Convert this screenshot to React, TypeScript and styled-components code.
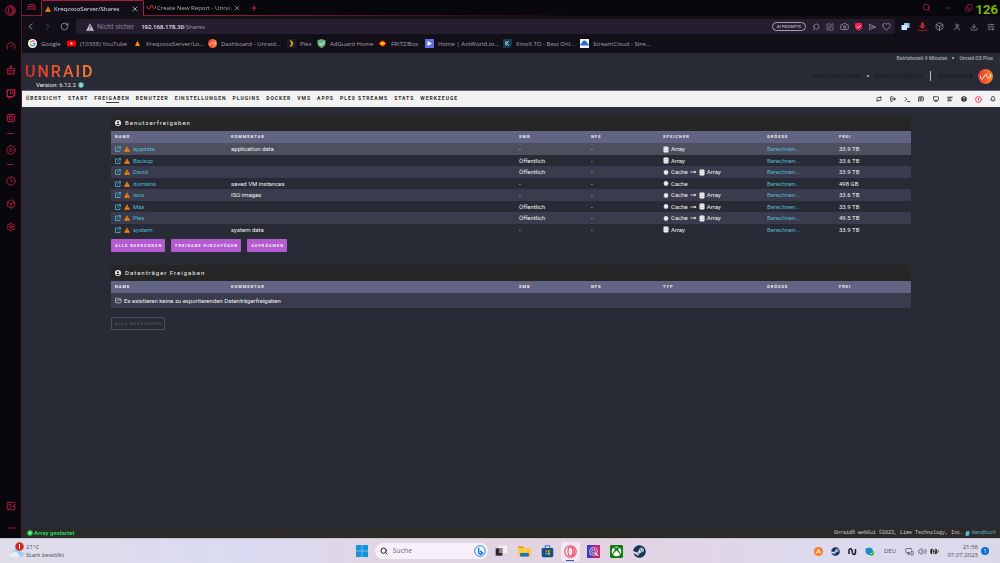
import React from "react";
import styled, { createGlobalStyle, css } from "styled-components";
import {
  Bell, Box, Camera, ChevronLeft, ChevronRight, CirclePlay, Clock, Copy, Cpu, Download, Ellipsis,
  FolderOpen, Gauge, Heart, Image, LogOut, Minus, Monitor, Plus, Repeat, RotateCw, Search,
  SendHorizontal, Settings, SlidersHorizontal, SquarePen, Terminal, Twitch, User, Volume2, X, MessageSquareText,
  TextAlignStart, CircleAlert, BatteryCharging, MonitorSmartphone,
} from "lucide-react";
import { FaSteam, FaXbox } from "react-icons/fa";

const ui = `"Open Sans", "Noto Sans", sans-serif`;
const web = `"Roboto", sans-serif`;
const pink = "#c21d47";

const Global = createGlobalStyle`
  *, *::before, *::after { box-sizing: border-box; }
  body { margin: 0; background: #282a36; }
  button, input { font: inherit; color: inherit; border: 0; padding: 0; margin: 0; background: none; }
  a { color: inherit; text-decoration: none; }
  svg { display: block; flex: none; }
`;

const Desktop = styled.div`
  min-height: 100vh;
  display: flex;
  flex-direction: column;
  font: 6px/8px ${ui};
`;
const Browser = styled.div`
  flex: 1;
  display: flex;
  background: #08080c;
`;

/* browser side bar */
const Sidebar = styled.aside`
  width: 21px;
  flex: none;
  display: flex;
  flex-direction: column;
  align-items: center;
  color: ${pink};
`;
const SideButton = styled.button<{ $h?: number }>`
  width: 21px;
  height: ${(p) => p.$h ?? 23}px;
  display: grid;
  place-items: center;
`;
const SideTop = styled.div`
  height: 34px;
  padding-top: 5px;
`;
const SideDash = styled.hr`
  width: 7px;
  height: 1px;
  margin: 3px 0 4px;
  border: 0;
  background: #8d1a38;
`;
const Spacer = styled.div`
  flex: 1;
`;

/* browser chrome */
const Window = styled.div`
  flex: 1;
  min-width: 0;
  display: flex;
  flex-direction: column;
  border-left: 1px solid #5d1430;
`;
const TabStrip = styled.div`
  height: 16px;
  display: flex;
  color: ${pink};
`;
const underline = css`
  border-bottom: 1px solid #8a1838;
`;
const StripStart = styled.div`
  width: 19px;
  display: grid;
  place-items: center;
  ${underline}
`;
const Tab = styled.div<{ $active?: boolean }>`
  width: ${(p) => (p.$active ? 103 : 101)}px;
  display: flex;
  align-items: center;
  gap: ${(p) => (p.$active ? 3 : 1)}px;
  padding: 0 4px 0 3px;
  color: ${(p) => (p.$active ? "#e6e2ec" : "#b3aebb")};
  ${(p) =>
    p.$active
      ? css`
          background: #120f18;
          border: 1px solid #a81b40;
          border-bottom: 0;
          border-radius: 2px 2px 0 0;
        `
      : underline}
`;
const TabTitle = styled.span`
  flex: 1;
  overflow: hidden;
  white-space: nowrap;
  mask-image: linear-gradient(90deg, #000 90%, #0006);
`;
const StripRest = styled.div`
  flex: 1;
  display: flex;
  align-items: center;
  justify-content: space-between;
  padding-left: 5px;
  border-bottom: 1px solid;
  border-image: linear-gradient(90deg, #8a1838, #08080c 45%) 1;
`;
const WindowButtons = styled.div`
  display: flex;
`;
const Slot = styled.button<{ $w: number }>`
  width: ${(p) => p.$w}px;
  display: grid;
  place-items: center;
`;
const Fps = styled.span`
  position: absolute;
  right: 2px;
  top: 3px;
  font: bold 13px/14px "Roboto", sans-serif;
  color: #76b900;
`;
const Toolbar = styled.div`
  height: 20px;
  display: flex;
  align-items: center;
  padding: 1px 1px 0 0;
  background: #120f18;
  color: #a59fb0;
`;
const Address = styled.div`
  flex: 1;
  height: 15px;
  margin: 0 2px 0 3px;
  padding: 0 2px 0 10px;
  display: flex;
  align-items: center;
  gap: 3px;
  background: #241e30;
  border-radius: 2px;
`;
const Insecure = styled.span`
  font: 7px/8px ${web};
  color: #8a8494;
`;
const Url = styled.span`
  flex: 1;
  margin-left: 4px;
  color: #a59fb0;
  b { font-weight: 600; color: #e6e2ec; }
`;
const Pill = styled.button`
  height: 9px;
  padding: 0 4px;
  border: 1px solid #a59fb0;
  border-radius: 5px;
  font: bold 4px/6px ${ui};
`;
const Bookmarks = styled.nav`
  height: 17px;
  padding: 0 6px 2px;
  display: flex;
  align-items: center;
  gap: 6px;
  background: #120f18;
  color: #a7a0b4;
`;
const Bookmark = styled.a<{ $w: number }>`
  width: ${(p) => p.$w}px;
  display: flex;
  align-items: center;
  gap: 4px;
  white-space: nowrap;
`;

/* Unraid page */
const Page = styled.main`
  flex: 1;
  display: flex;
  flex-direction: column;
  background: #282a36;
  color: #f2f2f2;
  font: 6px/8px ${web};
`;
const Header = styled.header`
  height: 38px;
  display: flex;
  justify-content: space-between;
  border-bottom: 1px solid #626483;
`;
const Brand = styled.div`
  padding: 10px 0 0 3px;
`;
const Wordmark = styled.h1`
  margin: 0;
  font: 500 16px/18px "Roboto", sans-serif;
  letter-spacing: 2px;
  color: transparent;
  background: linear-gradient(90deg, #e22828, #ff8c2f);
  background-clip: text;
`;
const Version = styled.div`
  display: flex;
  align-items: center;
  gap: 2px;
  padding-left: 11px;
`;
const ServerInfo = styled.div`
  display: flex;
  flex-direction: column;
  align-items: flex-end;
  padding: 1px 7px 0 0;
`;
const Uptime = styled.div`
  display: flex;
  align-items: center;
  gap: 5px;
  font: bold 5px/8px ${web};
  color: #999aa2;
`;
const ServerLine = styled.div`
  display: flex;
  align-items: center;
  gap: 5px;
  margin-top: 6px;
  font: 7px/16px "Roboto", sans-serif;
  color: #1a1a1e;
`;
const Divider = styled.i`
  width: 1px;
  height: 10px;
  margin: 0 2px;
  background: #b8b8be;
`;
const Bullet = styled.i`
  width: 2px;
  height: 2px;
  border-radius: 1px;
  background: #b8b8be;
`;
const Menu = styled.nav`
  height: 16px;
  display: flex;
  justify-content: space-between;
  background: #f2f2f2;
  color: #2b2b2b;
`;
const MenuList = styled.div`
  display: flex;
  gap: 6px;
  padding: 3px 0 0 4px;
`;
const MenuLink = styled.a<{ $active?: boolean }>`
  display: flex;
  flex-direction: column;
  align-items: center;
  font: bold 5px/8px ${web};
  letter-spacing: 1px;
  text-transform: uppercase;
  ${(p) => p.$active && css`&::after { content: ""; width: 13px; height: 1px; background: #3a3a3a; }`}
`;
const MenuIcons = styled.div`
  display: flex;
  align-items: center;
`;
const Content = styled.div`
  flex: 1;
  width: 100%;
  max-width: 800px;
  margin: 0 auto;
  padding-top: 8px;
`;
const Title = styled.h2`
  height: 16px;
  margin: 0;
  padding: 0 0 1px 4px;
  display: flex;
  align-items: center;
  gap: 4px;
  background: #262626;
  font: 6px/8px ${web};
  letter-spacing: 1px;
`;
const Shares = styled.table`
  width: 100%;
  table-layout: fixed;
  border-collapse: collapse;
  th, td { padding: 0 0 0 4px; text-align: left; line-height: 8px; }
  th {
    height: 12px;
    background: #626483;
    font-size: 4px;
    letter-spacing: 1px;
    text-transform: uppercase;
  }
`;
const Row = styled.tr<{ $tall?: boolean }>`
  height: 11px;
  &:nth-child(odd) { height: ${(p) => (p.$tall ? 15 : 12)}px; background: #3a3b4d; }
  &:hover, &:first-child { background: ${(p) => (p.$tall ? "#3a3b4d" : "#4d4f5e")}; }
`;
const Inline = styled.span`
  display: flex;
  align-items: center;
  gap: 2px;
`;
const NameCell = styled(Inline)`
  gap: 3px;
  color: #4fb9cf;
`;
const Link = styled.a`
  color: #4fb9cf;
`;
const Actions = styled.div<{ $top: number }>`
  display: flex;
  gap: 6px;
  padding: ${(p) => p.$top}px 0 13px;
`;
const Action = styled.button`
  height: 13px;
  padding: 0 3px 0 4px;
  border-radius: 1px;
  background: #b55bd1;
  font: bold 4px/8px ${web};
  letter-spacing: 1px;
  text-transform: uppercase;
  &:disabled { background: none; border: 1px solid #4d4e58; color: #4d4e58; padding: 0 2px 0 3px; }
`;
const Footer = styled.footer`
  height: 10px;
  display: flex;
  align-items: center;
  justify-content: space-between;
  padding: 0 4px 0 5px;
  background: #2b2a29;
`;
const Status = styled(Inline)`
  color: #22d65a;
  font-weight: bold;
  gap: 1px;
`;
const Copyright = styled(Inline)`
  font: 5px/8px "Liberation Mono", monospace;
  color: #d0d0d0;
`;

/* desktop task bar */
const Taskbar = styled.footer`
  height: 25px;
  display: grid;
  grid-template-columns: 1fr auto 1fr;
  align-items: center;
  background: linear-gradient(90deg, #dfdde8, #dadaf2 25%, #e1d5e3 38%, #e2d3e2 60%, #dcdaee 85%, #dbd8ea);
  border-top: 1px solid #c9c7d2;
  color: #4b4b55;
`;
const Weather = styled.div`
  display: flex;
  align-items: center;
  gap: 2px;
  padding-left: 10px;
`;
const Launcher = styled.div`
  display: flex;
  align-items: center;
  padding-left: 6px;
`;
const SearchBox = styled.label`
  width: 113px;
  height: 16px;
  margin: 0 2px 0 7px;
  padding: 0 2px 0 5px;
  display: flex;
  align-items: center;
  gap: 5px;
  border-radius: 8px;
  background: #f6f1f8;
  input { flex: 1; min-width: 0; font-size: 7px; outline: 0; }
  input::placeholder { color: #6b6873; opacity: 1; }
`;
const AppButton = styled.button<{ $active?: boolean }>`
  width: 19px;
  height: 19px;
  margin: 0 2px;
  position: relative;
  display: grid;
  place-items: center;
  border-radius: 2px;
  ${(p) =>
    p.$active &&
    css`
      background: #f1e8f2;
      &::after { content: ""; position: absolute; bottom: 0; width: 8px; height: 1px; background: #0b6fd0; }
    `}
`;
const Tray = styled.div`
  display: flex;
  align-items: center;
  justify-content: flex-end;
  padding-right: 11px;
`;
const Lang = styled.span`
  width: 26px;
  text-align: center;
`;
const ClockText = styled.div`
  width: 38px;
  text-align: right;
`;
const Count = styled.span`
  width: 8px;
  height: 8px;
  margin-left: 3px;
  border-radius: 4px;
  background: #0b6fd0;
  color: #fff;
  text-align: center;
`;

const Warn = ({ size = 6, fill = "#ff8c0a", mark = "#7a3b00" }) => (
  <svg width={size} height={size} viewBox="0 0 12 12">
    <path d="M6 .5 11.8 11.5H.2z" fill={fill} />
    <path d="M6 4v4M6 9v1.4" stroke={mark} strokeWidth="1.3" />
  </svg>
);
const OpenIcon = () => (
  <svg width="6" height="6" viewBox="0 0 12 12" fill="none" stroke="currentColor" strokeWidth="1.6">
    <path d="M6 2H1v9h9V7M5 7l5.500-5.500M7 1h4v4" />
  </svg>
);
const LongArrow = () => (
  <svg width="7" height="6" viewBox="0 0 14 12">
    <path d="M1 6h9" stroke="#f2f2f2" strokeWidth="1.8" />
    <path d="M9 3l4 3-4 3z" fill="#f2f2f2" />
  </svg>
);
const OperaRing = ({ size = 11, color = pink }) => (
  <svg width={size} height={size} viewBox="0 0 24 24" fill="none" stroke={color} strokeWidth="2">
    <circle cx="12" cy="12" r="10.6" />
    <ellipse cx="12" cy="12" rx="4.6" ry="8.4" />
    <path d="M14 3.6c7 2 7 15 0 16.8" />
  </svg>
);
const Broom = () => (
  <svg width="10" height="10" viewBox="0 0 24 24" fill="none" stroke="currentColor" strokeWidth="2">
    <path d="M10 9V2h4v7M3 9h18v5H3zM4 14v8h16v-8M9 22v-4M15 22v-4" />
  </svg>
);
const Wave = ({ size = 9, color = "#d9482b" }) => (
  <svg width={size} height={size} viewBox="0 0 18 18" fill="none" stroke={color} strokeWidth="1.8" strokeLinecap="round">
    <path d="M1 7v2c0 4 4 4 5 1l2-4c1-2 2-2 3 0l1 3c1 3 5 3 5-1V6" />
  </svg>
);
const UnraidDisc = ({ size = 9 }) => (
  <svg width={size} height={size} viewBox="0 0 30 30" fill="none">
    <defs>
      <linearGradient id="disc" x1="0" x2="1"><stop stopColor="#e5352b" /><stop offset="1" stopColor="#ff8b33" /></linearGradient>
    </defs>
    <circle cx="15" cy="15" r="15" fill="url(#disc)" />
    <path d="M5 14v2c0 5 5 5 6 1l3-5c1-2 3-2 3 1l1 2c2 4 7 4 7-1v-3" stroke="#fff" strokeWidth="1.8" strokeLinecap="round" />
  </svg>
);
const Disk = () => (
  <svg width="6" height="7" viewBox="0 0 12 14">
    <rect x="1" y="1" width="10" height="12" rx="2" fill="#f2f2f2" />
    <path d="M1 4.5h10M1 9h10" stroke="#b8a8b4" />
  </svg>
);
const CacheDot = () => (
  <svg width="6" height="7" viewBox="0 0 12 14">
    <circle cx="6" cy="7" r="4.8" fill="#d8d8e0" />
    <path d="M3.5 7h5M6 4.500v5" stroke="#fff" strokeWidth="1.4" />
  </svg>
);
const UserDot = () => (
  <svg width="6" height="6" viewBox="0 0 12 12">
    <circle cx="6" cy="6" r="6" fill="#f2f2f2" />
    <circle cx="6" cy="4.500" r="2.200" fill="#262626" />
    <path d="M2.300 10C3 6.800 9 6.800 9.700 10" fill="#262626" />
  </svg>
);
const Dot = ({ fill, mark }: { fill: string; mark: string }) => (
  <svg width="6" height="6" viewBox="0 0 12 12">
    <circle cx="6" cy="6" r="5.500" fill={fill} />
    <path d={mark} stroke="#fff" strokeWidth="1.600" fill="none" />
  </svg>
);
const art = (paths: React.ReactNode, size = 9) => (
  <svg width={size} height={size} viewBox="0 0 18 18">{paths}</svg>
);

const bookmarks = [
  { w: 33, text: "Google", icon: art(<><circle cx="9" cy="9" r="9" fill="#fff" /><g fill="none" strokeWidth="2.400"><path d="M5 6.500a5 5 0 0 1 8-1" stroke="#ea4335" /><path d="M5 6.500a5 5 0 0 0 0 5" stroke="#fbbc05" /><path d="M5 11.500a5 5 0 0 0 7.500 1.200" stroke="#34a853" /><path d="M12.500 12.700A5 5 0 0 0 14 9H9.500" stroke="#4285f4" /></g></>) },
  { w: 60, text: "(10338) YouTube", icon: art(<><rect y="3" width="18" height="12" rx="3" fill="#f00" /><path d="M7 6v6l5-3z" fill="#fff" /></>) },
  { w: 69, text: "KreqzxooServer/Lo...", icon: art(<path d="M9 3 14 14H4z" fill="#ff8c0a" />) },
  { w: 73, text: "Dashboard - Unraid...", icon: <UnraidDisc /> },
  { w: 24, text: "Plex", icon: art(<><rect width="18" height="18" rx="2" fill="#1d1c1f" /><path d="M5 3h4l4 6-4 6H5l4-6z" fill="#f0a818" /></>) },
  { w: 55, text: "AdGuard Home", icon: art(<><path d="M9 0 17 2.500v6c0 5-4 8-8 9.500-4-1.500-8-4.500-8-9.500v-6z" fill="#67b279" /><path d="m5 8 3.500 4L15 6" stroke="#fff" strokeWidth="2" fill="none" /></>) },
  { w: 41, text: "FRITZ!Box", icon: art(<><path d="M9 2 18 9 9 16 0 9z" fill="#e2001a" /><path d="M9 5v8M4 9h10" stroke="#ffd500" strokeWidth="4" /></>) },
  { w: 72, text: "Home | AniWorld.to...", icon: art(<><rect width="18" height="18" fill="#5e6fe8" /><path d="M5 4v10l9-5z" fill="#fff" /></>) },
  { w: 71, text: "KinoX.TO - Best Onl...", icon: art(<><path d="M0 0h18v13l-5 5H0z" fill="#10404f" /><path d="M6 4v9M12 4 7 8.500l5 4.500" stroke="#c5dde4" strokeWidth="2" fill="none" /></>) },
  { w: 70, text: "StreamCloud - Stre...", icon: art(<><rect width="18" height="18" fill="#f3f6fa" /><path d="M1 13a4 4 0 0 1 3-5 5 5 0 0 1 10 0 4 4 0 0 1 3 5z" fill="#2b70c9" /></>) },
];

const menu = ["Übersicht", "Start", "Freigaben", "Benutzer", "Einstellungen", "Plugins", "Docker", "VMs", "Apps", "Plex Streams", "Stats", "Werkzeuge"];

type Store = "array" | "cache" | "both";
const shares: [string, string, string, Store, string][] = [
  ["appdata", "application data", "-", "array", "33.9 TB"],
  ["Backup", "", "Öffentlich", "array", "33.6 TB"],
  ["David", "", "Öffentlich", "both", "33.9 TB"],
  ["domains", "saved VM instances", "-", "cache", "498 GB"],
  ["isos", "ISO images", "-", "both", "33.6 TB"],
  ["Max", "", "Öffentlich", "both", "33.9 TB"],
  ["Plex", "", "Öffentlich", "both", "49.5 TB"],
  ["system", "system data", "-", "array", "33.9 TB"],
];

const Col = styled.col<{ $w: string }>`
  width: ${(p) => p.$w};
`;
const Columns = () => (
  <colgroup>
    {["14.5%", "36%", "9%", "9%", "13%", "9%", "9.5%"].map((w, i) => <Col key={i} $w={w} />)}
  </colgroup>
);
const Head = ({ store }: { store: string }) => (
  <thead>
    <tr>{["Name", "Kommentar", "SMB", "NFS", store, "Grösse", "Frei"].map((h) => <th key={h} scope="col">{h}</th>)}</tr>
  </thead>
);

export default function App() {
  return (
    <Desktop>
      <Global />
      <Browser>
        <Sidebar>
          <SideTop><OperaRing /></SideTop>
          <SideButton $h={24} aria-label="Speed"><Gauge size={10} /></SideButton>
          <SideButton $h={24} aria-label="Cleaner"><Broom /></SideButton>
          <SideButton $h={24} aria-label="Twitch"><Twitch size={10} strokeWidth={3} /></SideButton>
          <SideButton $h={24} aria-label="Limiter"><Cpu size={10} /></SideButton>
          <SideDash />
          <SideButton aria-label="Player"><CirclePlay size={10} /></SideButton>
          <SideDash />
          <SideButton aria-label="History"><Clock size={10} /></SideButton>
          <SideButton aria-label="Extensions"><Box size={10} /></SideButton>
          <SideButton aria-label="Settings"><Settings size={10} /></SideButton>
          <Spacer />
          <SideButton aria-label="Wallpaper"><Image size={10} /></SideButton>
          <SideButton $h={21} aria-label="More"><Ellipsis size={10} /></SideButton>
        </Sidebar>
        <Window>
          <TabStrip>
            <StripStart>
              {art(<g fill="none" stroke={pink} strokeWidth="1.600"><path d="M2 14V7l2-4h10l2 4v7l-3-2H5zM2 7h14" /><path d="M6 10h1M11 10h1" /></g>)}
            </StripStart>
            <Tab $active>
              <Warn /><TabTitle>KreqzxooServer/Shares</TabTitle><X size={8} />
            </Tab>
            <Tab>
              <Wave /><TabTitle>Create New Report - Unraid</TabTitle><X size={8} />
            </Tab>
            <StripRest>
              <button aria-label="New tab"><Plus size={8} strokeWidth={3} /></button>
              <WindowButtons>
                <Slot $w={21} aria-label="Search tabs"><Search size={9} /></Slot>
                <Slot $w={21} aria-label="Minimize"><Minus size={8} /></Slot>
                <Slot $w={21} aria-label="Restore"><Copy size={8} style={{ transform: "scaleY(-1)" }} /></Slot>
                <Slot $w={21} aria-label="Close"><X size={8} /></Slot>
              </WindowButtons>
            </StripRest>
          </TabStrip>
          <Toolbar>
            <Slot $w={17} aria-label="Back"><ChevronLeft size={11} /></Slot>
            <Slot $w={17} aria-label="Forward"><ChevronRight size={11} color="#4b4655" /></Slot>
            <Slot $w={17} aria-label="Reload"><RotateCw size={9} /></Slot>
            <Address>
              <Warn size={8} fill="#c9c4d0" mark="#241e30" />
              <Insecure>Nicht sicher</Insecure>
              <Url><b>192.168.178.30</b>/Shares</Url>
              <Pill>AI PROMPTS</Pill>
              <WindowButtons>
                <Slot $w={14} aria-label="Zoom"><Search size={8} style={{ transform: "scaleX(-1)" }} /></Slot>
                <Slot $w={14} aria-label="Edit"><SquarePen size={8} /></Slot>
                <Slot $w={14} aria-label="Snapshot"><Camera size={9} /></Slot>
                <Slot $w={14} aria-label="Blocker">{art(<><path d="M9 1 16 3v7c0 4-4 6-7 7-3-1-7-3-7-7V3z" fill="#fa1e4e" /><path d="m6 9 2.500 2.500L13 7" stroke="#fff" strokeWidth="2" fill="none" /></>)}</Slot>
                <Slot $w={14} aria-label="Send"><SendHorizontal size={8} /></Slot>
                <Slot $w={14} aria-label="Favourite"><Heart size={9} /></Slot>
              </WindowButtons>
            </Address>
            <Slot $w={17} aria-label="Translate">{art(<><path d="M6 2h11v10H6z" fill="#8ec8ef" /><path d="M1 6h11v10H1z" fill="#c9ebff" /></>)}</Slot>
            <Slot $w={17} aria-label="Downloader">{art(<><path d="M6 1h6v6h4l-7 7-7-7h4z" fill="#b8262b" /><path d="M0 12v5h18v-5" stroke="#8c1d22" strokeWidth="2" fill="none" /></>)}</Slot>
            <Slot $w={17} aria-label="Extensions"><Box size={9} /></Slot>
            <Slot $w={17} aria-label="Profile"><User size={8} /></Slot>
            <Slot $w={17} aria-label="Downloads"><Download size={8} /></Slot>
            <Slot $w={17} aria-label="Easy setup"><SlidersHorizontal size={8} /></Slot>
          </Toolbar>
          <Bookmarks>
            {bookmarks.map((b) => <Bookmark key={b.text} href="#" $w={b.w}>{b.icon}{b.text}</Bookmark>)}
          </Bookmarks>
          <Page>
            <Header>
              <Brand>
                <Wordmark>UNRAID</Wordmark>
                <Version>Version: 6.12.2 <Dot fill="#5cc8c0" mark="M6 5v5M6 2.500v1" /></Version>
              </Brand>
              <ServerInfo>
                <Uptime><span>Betriebszeit 9 Minuten</span><Bullet /><span>Unraid OS Plus</span></Uptime>
                <ServerLine>
                  <span>KreqzxooServer</span><Bullet /><span>KreqzxooServer</span><Divider /><span>Kreqzxoo ▾</span><UnraidDisc size={15} />
                </ServerLine>
              </ServerInfo>
            </Header>
            <Menu>
              <MenuList>
                {menu.map((m) => <MenuLink key={m} href="#" $active={m === "Freigaben"}>{m}</MenuLink>)}
              </MenuList>
              <MenuIcons>
                <Slot $w={14} aria-label="Sync"><Repeat size={6} strokeWidth={3} /></Slot>
                <Slot $w={14} aria-label="Logout"><LogOut size={6} strokeWidth={4} /></Slot>
                <Slot $w={14} aria-label="Terminal"><Terminal size={7} strokeWidth={3} /></Slot>
                <Slot $w={14} aria-label="Feedback"><MessageSquareText size={6} strokeWidth={3} /></Slot>
                <Slot $w={15} aria-label="Info"><Monitor size={6} strokeWidth={3} /></Slot>
                <Slot $w={14} aria-label="Log"><TextAlignStart size={6} strokeWidth={4} /></Slot>
                <Slot $w={14} aria-label="Help"><Dot fill="#222" mark="M4 5c0-3 4-3 4-.5C8 6 6 6 6 7.500M6 8.500V10" /></Slot>
                <Slot $w={15} aria-label="Alerts"><CircleAlert size={7} strokeWidth={3} color="#e8305a" /></Slot>
                <Slot $w={14} aria-label="Notifications"><Bell size={6} strokeWidth={3} /></Slot>
              </MenuIcons>
            </Menu>
            <Content>
              <Title><UserDot />Benutzerfreigaben</Title>
              <Shares>
                <Columns />
                <Head store="Speicher" />
                <tbody>
                  {shares.map(([name, comment, smb, store, free]) => (
                    <Row key={name}>
                      <td><NameCell><OpenIcon /><Warn /><Link href="#">{name}</Link></NameCell></td>
                      <td>{comment}</td>
                      <td>{smb}</td>
                      <td>-</td>
                      <td>
                        <Inline>
                          {store !== "array" && <><CacheDot />Cache</>}
                          {store === "both" && <LongArrow />}
                          {store !== "cache" && <><Disk />Array</>}
                        </Inline>
                      </td>
                      <td><Link href="#">Berechnen...</Link></td>
                      <td>{free}</td>
                    </Row>
                  ))}
                </tbody>
              </Shares>
              <Actions $top={4}>
                <Action>Alle berechnen</Action>
                <Action>Freigabe hinzufügen</Action>
                <Action>Aufräumen</Action>
              </Actions>
              <Title><UserDot />Datenträger Freigaben</Title>
              <Shares>
                <Columns />
                <Head store="Typ" />
                <tbody>
                  <Row $tall>
                    <td colSpan={7}><Inline><FolderOpen size={7} />Es existieren keine zu exportierenden Datenträgerfreigaben</Inline></td>
                  </Row>
                </tbody>
              </Shares>
              <Actions $top={9}><Action disabled>Alle berechnen</Action></Actions>
            </Content>
            <Footer>
              <Status><Dot fill="#22d65a" mark="M4 6h4M6 4v4" />Array gestartet</Status>
              <Copyright>Unraid® webGui ©2023, Lime Technology, Inc. {art(<path d="M4 1h13l-3 16H1z" fill="#4fc3dc" />, 5)}<Link href="#">Handbuch</Link></Copyright>
            </Footer>
          </Page>
        </Window>
        <Fps>126</Fps>
      </Browser>
      <Taskbar>
        <Weather>
          <svg width="14" height="18" viewBox="0 0 28 36">
            <path d="M5 29a6 6 0 0 1 2-11 8 8 0 0 1 15 1 5 5 0 0 1 1 10z" fill="#a8c8f4" />
            <path d="M2 30a4 4 0 0 1 3-8 6 6 0 0 1 11 2 4 4 0 0 1 2 6z" fill="#e4effc" />
            <circle cx="19" cy="9" r="8.500" fill="#cc2a20" />
            <path d="M19 4v10" stroke="#fff" strokeWidth="2" />
          </svg>
          <div>21°C<br />Stark bewölkt</div>
        </Weather>
        <Launcher>
          <button aria-label="Start">
            <svg width="12" height="12" viewBox="0 0 24 24"><path d="M0 0h11.500v11.500H0zM12.500 0H24v11.500H12.500zM0 12.500h11.500V24H0zM12.500 12.500H24V24H12.500z" fill="#1593de" /></svg>
          </button>
          <SearchBox>
            <Search size={8} color="#222" strokeWidth={3} />
            <input placeholder="Suche" aria-label="Suche" />
            {art(<><circle cx="9" cy="9" r="8" fill="#eaf5fd" stroke="#2a86dd" strokeWidth="1.500" /><path d="M7 4v8l3 2 3-2-4-3" stroke="#1474d4" strokeWidth="2" fill="none" /></>, 12)}
          </SearchBox>
          <AppButton aria-label="Task view">{art(<><path d="M6 1h12v11H6z" fill="#f4f2f4" /><path d="M1 5h10v11H1z" fill="#2b2b2e" /><path d="M6 5h5v7H6z" fill="#8d8b8f" /></>, 12)}</AppButton>
          <AppButton aria-label="Explorer">{art(<><path d="M0 2h7l2 2h9v12H0z" fill="#fcca3e" /><path d="M0 2h7l1 2H0z" fill="#e09a18" /><path d="M3 11h12v5H3z" fill="#1673c4" /></>, 13)}</AppButton>
          <AppButton aria-label="Store">{art(<><path d="M6 4V1h6v3" stroke="#2b8ad6" strokeWidth="1.600" fill="none" /><rect x="1" y="4" width="16" height="13" rx="2" fill="#164f88" /><path d="M6 7h3v3H6z" fill="#f25022" /><path d="M9.500 7h3v3h-3z" fill="#7fba00" /><path d="M6 10.500h3v3H6z" fill="#00a4ef" /><path d="M9.500 10.500h3v3h-3z" fill="#ffb900" /></>, 13)}</AppButton>
          <AppButton $active aria-label="Opera"><OperaRing size={13} color="#f0466e" /></AppButton>
          <AppButton aria-label="Radio">{art(<><defs><linearGradient id="rd"><stop stopColor="#2440c8" /><stop offset="1" stopColor="#e02860" /></linearGradient></defs><rect width="18" height="18" fill="url(#rd)" /><g fill="none" stroke="#fff"><circle cx="9" cy="9" r="5.500" /><circle cx="9" cy="9" r="2.500" /><path d="M11 11l4 4" strokeWidth="1.600" /></g></>, 13)}</AppButton>
          <AppButton aria-label="Xbox">{art(<><rect width="18" height="18" rx="2" fill="#107c10" /><g transform="translate(2 2)"><FaXbox size={14} color="#fff" /></g></>, 13)}</AppButton>
          <AppButton aria-label="Steam"><FaSteam size={13} color="#14345c" /></AppButton>
        </Launcher>
        <Tray>
          <Slot $w={17} aria-label="Avast">{art(<><circle cx="9" cy="9" r="9" fill="#ff7a1a" /><path d="M5 13 9 4l4 9M6 10h7" stroke="#fff" strokeWidth="2" fill="none" /></>)}</Slot>
          <Slot $w={17} aria-label="Steam"><FaSteam size={9} color="#14345c" /></Slot>
          <Slot $w={17} aria-label="Nahimic">{art(<path d="M2 14V7c0-5 5-5 6 0l1 5c1 4 6 4 6-1V4" stroke="#18181c" strokeWidth="3" fill="none" />)}</Slot>
          <Slot $w={16} aria-label="Security">{art(<><path d="M1 3l7-2 7 2v6c0 4-4 6-7 7-3-1-7-3-7-7z" fill="#1d8ad8" /><circle cx="13" cy="12" r="5" fill="#18a058" /><path d="m10.500 12 2 2 3-3.500" stroke="#fff" fill="none" strokeWidth="1.500" /></>)}</Slot>
          <Lang>DEU</Lang>
          <Slot $w={13} aria-label="Network"><MonitorSmartphone size={9} /></Slot>
          <Slot $w={12} aria-label="Volume"><Volume2 size={9} /></Slot>
          <Slot $w={12} aria-label="Battery"><BatteryCharging size={9} fill="#222" color="#222" /></Slot>
          <ClockText>21:58<br />07.07.2023</ClockText>
          <Count>1</Count>
        </Tray>
      </Taskbar>
    </Desktop>
  );
}
